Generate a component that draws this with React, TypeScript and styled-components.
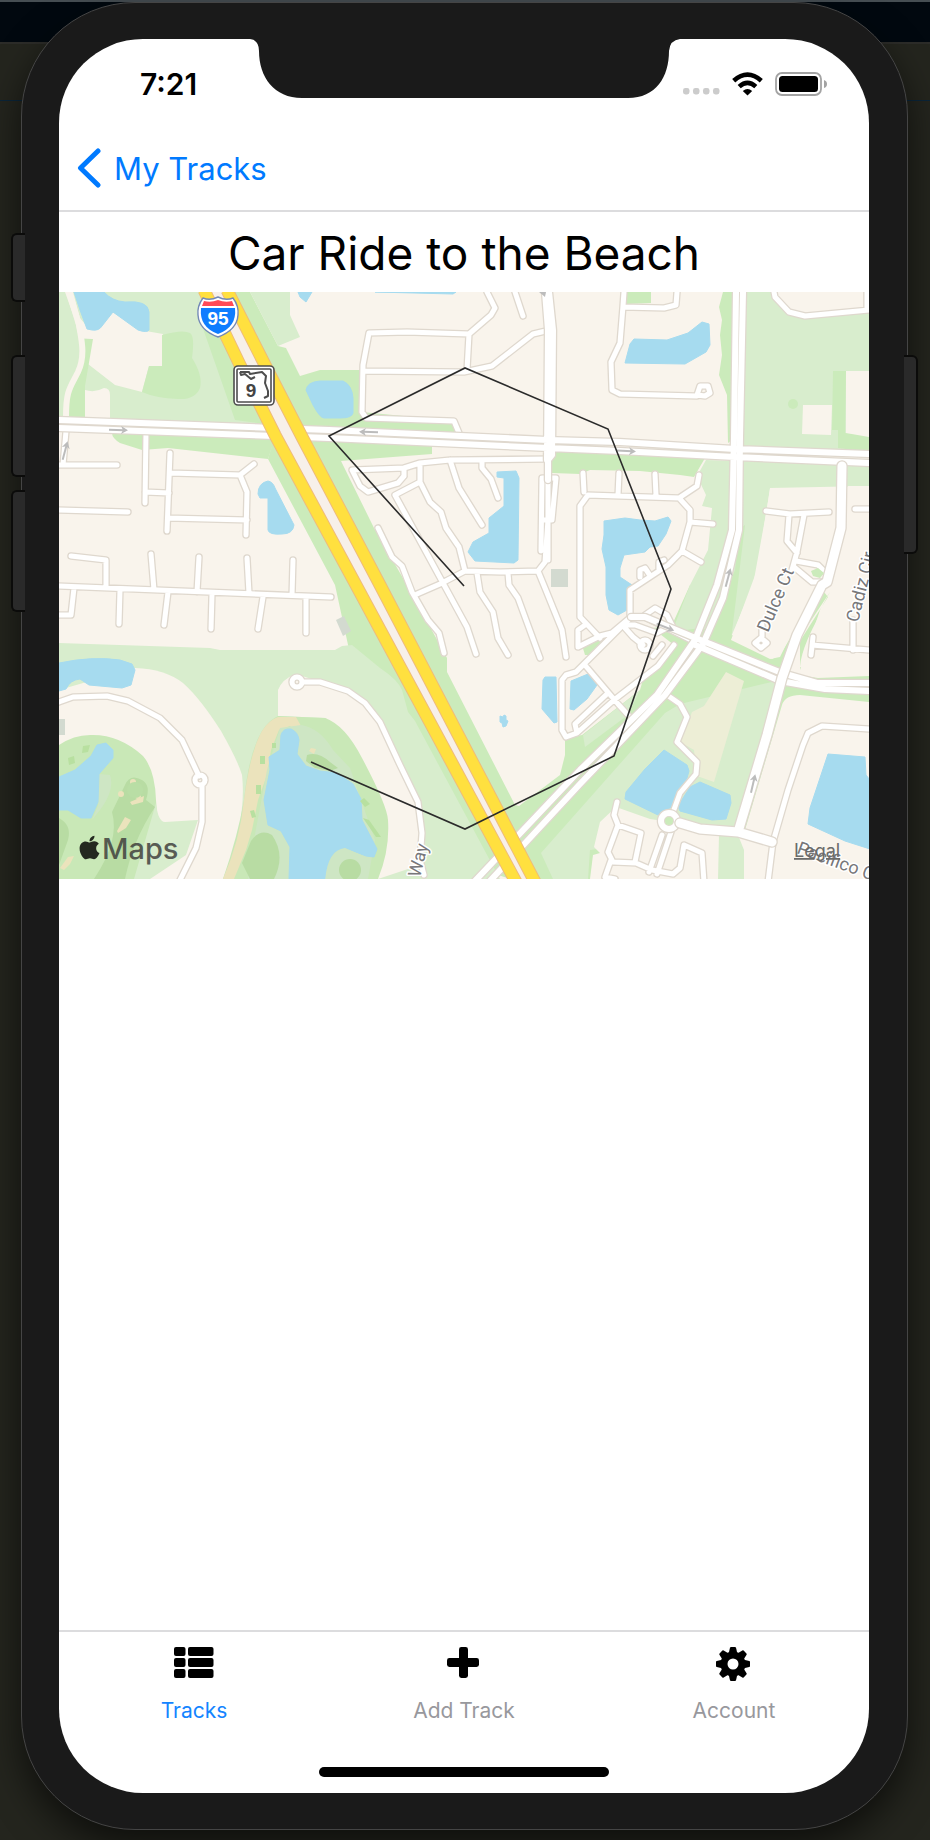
import React from 'react';
import styled, { createGlobalStyle } from 'styled-components';
import { FaApple } from 'react-icons/fa';

const GlobalStyle = createGlobalStyle`
  * { box-sizing: border-box; }
  body { margin: 0; background: #1d1e18; font-family: Inter, "Liberation Sans", sans-serif; }
`;

const Desktop = styled.div`
  min-height: 100vh;
  display: flex;
  padding: 2px 22px 10px 21px;
  background:
    linear-gradient(#464e53, #464e53) 0 0 / 100% 2px no-repeat,
    linear-gradient(#2c2c29, #2c2c29) 0 42px / 100% 2px no-repeat,
    linear-gradient(#0b2539, #0b2539) 0 100px / 100% 1px no-repeat,
    linear-gradient(#01080f, #01080f) 0 0 / 100% 42px no-repeat,
    #24251e;
`;

const Phone = styled.div`
  position: relative;
  flex: 1;
  display: flex;
  padding: 36px 38px 36px 37px;
  border: 1px solid #454545;
  border-radius: 114px;
  background: #1a1a1a;
  box-shadow: 0 16px 36px rgba(0, 0, 0, 0.6);
`;

const SideKey = styled.span<{ $side: 'left' | 'right'; $top: number; $height: number }>`
  position: absolute;
  ${p => p.$side}: -11px;
  top: ${p => p.$top}px;
  width: 14px;
  height: ${p => p.$height}px;
  background: #2a2a2a;
  border: 2px solid #0b0b0a;
  border-${p => (p.$side === 'left' ? 'right' : 'left')}: 0;
  border-radius: ${p => (p.$side === 'left' ? '6px 0 0 6px' : '0 6px 6px 0')};
`;

const Screen = styled.div`
  position: relative;
  flex: 1;
  min-width: 0;
  display: flex;
  flex-direction: column;
  overflow: hidden;
  border-radius: 84px;
  background: #fff;
`;

const Notch = styled.svg`
  position: absolute;
  top: 0;
  left: 50%;
  margin-left: -214px;
`;

const StatusBar = styled.header`
  display: flex;
  align-items: center;
  justify-content: space-between;
  height: 89px;
  padding: 0 42px 0 81px;
`;

const Clock = styled.time`
  font-size: 30px;
  font-weight: 600;
  line-height: 36px;
`;

const StatusIcons = styled.div`
  display: flex;
  align-items: center;
  gap: 12px;
`;

const NavBar = styled.nav`
  display: flex;
  align-items: center;
  height: 84px;
  padding: 0 18px;
  border-bottom: 2px solid #dcdcde;
`;

const BackLink = styled.a`
  display: flex;
  align-items: center;
  gap: 13px;
  color: #007aff;
  font-size: 31px;
  line-height: 40px;
  text-decoration: none;
`;

const Title = styled.h1`
  margin: 0;
  padding: 13px 0 11px;
  font-size: 46px;
  font-weight: 400;
  line-height: 56px;
  text-align: center;
`;

const Content = styled.main`
  flex: 1;
`;

const MapView = styled.svg`
  display: block;
  width: 100%;
  background: #f9f4ec;
`;

const TabBar = styled.nav`
  display: flex;
  height: 132px;
  border-top: 2px solid #dcdcde;
`;

const Tab = styled.a<{ $active?: boolean }>`
  flex: 1;
  display: flex;
  flex-direction: column;
  align-items: center;
  gap: 16px;
  padding-top: 14px;
  color: ${p => (p.$active ? '#1484ff' : '#98989d')};
  font-size: 21px;
  line-height: 26px;
  text-decoration: none;
`;

const TabIcon = styled.svg`
  width: 40px;
  height: 36px;
  fill: #000;
`;

const HomeArea = styled.div`
  display: flex;
  justify-content: center;
  padding: 5px 0 16px;
`;

const HomeIndicator = styled.span`
  width: 290px;
  height: 10px;
  border-radius: 5px;
  background: #000;
`;

/* Terrain: each entry is painted in order, [fill, outline]. */
const PARK = '#d8edcd';
const GRASS = '#cbebbb';
const LOT = '#f9f4ec';
const WATER = '#a6dbef';
const GOLF = '#c9e8b7';
const ROUGH = '#cee6c4';
const FAIRWAY = '#b8dca3';
const SAND = '#ebe3bc';

const terrain: [string, string][] = [
  [PARK, 'M59 292H205L275 425L59 417Z'],
  [LOT, 'M65 292H73L80 318L90 330L113 312L140 330L163 334V366H149L142 392L115 385L88 364L92 339L79 338L75 320Z'],
  [LOT, 'M85 390Q95 393 104 388Q110 388 110 395V420H85Z'],
  [GRASS, 'M79 339H93L85 386V420H69V395L83 365Z'],
  [GRASS, 'M162 335Q183 329 190 333Q195 336 192 358Q203 375 200 388Q195 400 178 399Q155 398 142 392L149 366H162Z'],
  [GRASS, 'M112 433L275 438L268 459L168 448L142 450L120 443Q112 438 112 433Z'],
  [GRASS, 'M235 292H250L278 346L286 348L300 376L320 370H362V412L455 421V434L330 433L235 420L200 320Z'],
  [PARK, 'M250 292H290V315L300 337L278 346Z'],
  [GRASS, 'M268 459L275 435L432 446V454L341 461L374 528L411 592L447 658V672L515 805L519 806L560 775L565 755V738L582 735L640 690L650 655L585 655L582 645L596 640L640 630L672 625L690 585L708 620L780 665L760 735L660 735L600 879H510L426 850L360 700L335 585Z'],
  [PARK, 'M59 643L210 648L220 650H335L342 646L352 645L380 668Q398 680 402 690L408 712L415 721L500 879H59Z'],
  [PARK, 'M583 735L640 690L628 715L585 747Z'],
  [PARK, 'M541 853L665 713L680 704L780 680L738 832L590 850L588 879H553Z'],
  [LOT, 'M59 690L135 668Q165 669 183 683Q200 698 221 731Q238 761 242 775Q247 820 223 879H59Z'],
  [GOLF, 'M59 745Q75 734 93 735Q120 735 143 756Q155 770 156 800L157 815L152 830Q150 855 135 879H59Z'],
  [PARK, 'M156 803Q158 822 165 822L198 820L186 855L150 879H134Z'],
  [ROUGH, 'M100 810Q115 790 110 775L99 774L98 805L92 820Z'],
  [FAIRWAY, 'M94 879Q120 840 112 812L125 785Q130 773 142 780Q151 785 146 800L155 807Q133 840 125 879Z'],
  [FAIRWAY, 'M59 818Q72 825 68 840L59 865Z'],
  [SAND, 'M117 831L125 817L131 820L126 828L118 833Z'],
  [SAND, 'M130 802L144 796L143 802L132 805Z'],
  [SAND, 'M60 868L68 857L74 856L70 864L64 870Z'],
  [LOT, 'M278 716V690Q282 679 296 674L348 691L380 722L418 802L420 865L378 879V800L326 718Z'],
  [GOLF, 'M278 716L325 718Q345 725 362 758Q387 805 388 820Q390 850 378 879H223Q238 835 244 800Q249 752 262 731Q269 720 278 716Z'],
  [SAND, 'M278 717H296L301 726L303 742L299 735L290 726L279 730L271 750L267 775L258 800L252 830L246 850L234 879H223Q240 840 244 800Q250 752 262 731Q269 720 278 717Z'],
  [ROUGH, 'M301 725Q320 728 333 750L350 768L375 840L368 879H248L253 845L267 770L280 728Z'],
  [FAIRWAY, 'M242 863L251 841Q260 828 272 835Q286 855 274 879H250Z'],
  [FAIRWAY, 'M307 755Q318 751 330 762L338 768L330 771L315 768L306 761Z'],
  [SAND, 'M311 748L316 749L314 754L309 751Z'],
  [LOT, 'M623 625L660 634L674 645L650 670L614 700L584 664Z'],
  [LOT, 'M616 807L650 819L738 832L869 850V879H590L593 855L600 853L594 847L600 822Z'],
  [PARK, 'M719 835H738L744 850V879H718Z'],
  [GRASS, 'M723 292H736L732 440L728 443L727 395L719 375L722 355L720 335L722 320L719 307Z'],
  [GRASS, 'M627 292H651V303L627 304Z'],
  [PARK, 'M745 292H869V455L743 449Z'],
  [LOT, 'M774 292H866V310L805 316L789 312Z'],
  [GRASS, 'M833 371H846L845 433L869 435V452L838 448V430L832 430Z'],
  [LOT, 'M846 371H869V437L846 433Z'],
  [LOT, 'M803 405H832L831 435L802 434Z'],
  [GRASS, 'M551 448L705 458L694 477L680 475L640 471L590 470L580 474L552 473Z'],
  [PARK, 'M706 460L869 465V486L770 488L767 508L753 585L731 637L700 628L672 632L690 585L708 550L712 508L702 506L706 495L697 476Z'],
  [GRASS, 'M731 640L745 525L740 528L735 570L710 632L778 672L818 678L869 676V702L800 695Q785 695 782 705L745 830L737 832L782 690L798 640L830 592L820 610L800 670V641L828 597L820 587L795 630L780 655L772 659Z'],
  [LOT, 'M770 489L837 490L841 530L808 600L780 657L770 659L731 640L757 570Z'],
  [LOT, 'M848 486H869V676L818 674L800 667Q801 645 830 597L847 530Z'],
  ['#edeed6', 'M726 672L744 681L714 782L697 776L694 750L680 742L692 712L704 706Z'],
  ['#d3dad0', 'M551 569H568V587H551Z'],
  ['#d3dad0', 'M336 620L344 616L351 631L343 636Z'],
  ['#d3dad0', 'M59 719H65V735H59Z'],
];

const lakes = [
  'M74 292H104Q112 301 125 302Q148 300 149 312V330Q147 333 138 330L113 312L102 326Q99 331 92 330L87 329L80 310Z',
  'M298 292H312L309 297L306 302L300 297Z',
  'M375 292H456L453 294Z',
  'M306 390Q307 382 320 381H343Q352 385 353 398V413Q352 418 340 418H324Q320 418 313 405Z',
  'M258 494Q258 483 268 481Q273 482 275 488L294 525Q293 534 282 534Q269 535 268 530V498H260Z',
  'M497 472L516 471L519 478L518 560L514 563L475 561L468 552L473 542L489 533V518L504 506V478L497 477Z',
  'M634 339L667 340L688 333L702 322L709 324L710 345L706 352L685 364L625 363L630 344Z',
  'M604 521L625 518L640 520L655 521L668 517L671 521L666 534L658 546L650 547L645 552L624 555L620 568V577L632 585L627 610L618 615L609 610L606 595V567L602 549L604 535Z',
  'M545 677H556L557 722L554 723L542 709L543 680Z',
  'M571 681L588 674L597 685L587 699L574 710L570 709Z',
  'M500 716L503 717L504 715L506 716L506 720L508 721L506 726L503 727L502 723L500 722Z',
  'M59 663Q92 656 120 660L132 664L135 670L131 685L122 688L89 685L80 679Q70 680 66 689L59 691Z',
  'M59 777L75 770L91 756L97 745L106 743L113 750L113 758L99 774L98 802L91 818L81 818L68 810H59Z',
  'M281 735Q283 728 291 729Q298 732 299 740L297 754L306 766L320 771L337 773L353 784L361 799L362 820L377 849L374 857L366 856L345 848Q332 850 330 862L325 879H289L290 847L281 831L268 825L264 800L270 770L269 757L280 750Z',
  'M664 750L687 765L689 771L685 785L673 806L658 815L625 799L626 792L645 769Z',
  'M700 782L730 795L731 803L726 819L712 820L680 811L678 806L690 787Z',
  'M828 754L865 757L866 775L870 780V849L845 841L808 824L810 808Z',
];

const lanes = [
  'M67 420L63 465', 'M59 465H117', 'M59 510L128 512', 'M146 431L145 503', 'M145 492L169 493',
  'M170 453L167 531', 'M170 473L240 475L254 464', 'M240 475L247 492L246 535', 'M168 518L247 520',
  'M71 556L106 560V588', 'M151 554L154 590', 'M199 557L197 592', 'M247 558L249 593', 'M293 560L292 595',
  'M59 586L331 597', 'M74 588L71 615H59', 'M120 590L119 624', 'M168 592L164 625', 'M212 594L211 629',
  'M263 597L258 629', 'M306 597V633',
  'M59 702L73 697L107 696L128 701L160 718L182 740L199 776', 'M202 786V822L196 848L179 882',
  'M205 780a5 5 0 1 0-10 0a5 5 0 1 0 10 0', 'M302 682a5 5 0 1 0-10 0a5 5 0 1 0 10 0',
  'M303 682H320L348 691L365 703L380 722L400 765L418 802L422 833L420 860L424 875',
  'M487 292L495 308L491 315L469 334L407 332L369 333L363 365L362 412L366 418L454 421L459 433L452 441',
  'M363 371L464 372L492 366L533 334L550 330', 'M469 334L467 370', 'M515 292L523 316',
  'M404 476V468L352 470L360 486L368 492L398 483L404 476', 'M404 468L420 463L450 460L548 459',
  'M420 463V482L395 495L443 583L467 627L476 654', 'M420 482L430 502L441 512L446 528L459 547L465 571',
  'M450 460L459 488L482 525', 'M482 461V468L491 479L498 498',
  'M378 528L392 557L402 566L412 592L428 620L439 633L444 653',
  'M417 594L440 584L465 571L500 572L538 571L545 562L548 520', 'M477 573L480 592L493 612L498 638L508 655',
  'M508 573L509 585L518 598L540 658', 'M538 571L545 588L562 630L566 657',
  'M541 551L542 478H556L552 520H543', 'M548 478V560',
  'M624 292L623 306L620 343L611 362L612 390L620 394L697 396', 'M697 395L700 386L708 386L710 393L705 396L697 395',
  'M623 307L664 308L676 305L677 292', 'M774 292L775 297L789 312L805 316L869 310', 'M867 292V310',
  'M583 473L584 492', 'M600 638L580 617V506L588 495L679 498L690 510V522L682 551L668 565L630 590V617',
  'M619 473L618 495', 'M655 474L656 495', 'M679 498L697 486L699 475', 'M690 522L713 524', 'M682 551L701 562',
  'M640 577V570L645 568L649 574', 'M659 570V562L664 560',
  'M585 625L578 630V647L600 636L612 633L631 617',
  'M631 617L584 664L576 672L566 675L562 680V730L566 737L577 733L575 724L608 693', 'M577 733L614 700L658 666L674 645',
  'M584 664L618 704L628 715', 'M623 625L635 625L657 633L672 625', 'M625 628L633 637L643 645',
  'M650 645a5 5 0 1 0-10 0a5 5 0 1 0 10 0', 'M653 656L662 645', 'M645 615L655 608L667 615L672 625',
  'M667 695L680 704L687 717L677 742L697 762L696 774L680 793L672 815',
  'M617 802L614 815L618 825L608 852L613 862L636 863L652 870L673 874L680 868L684 845L702 853L704 882',
  'M618 825L641 833L635 862', 'M611 860L605 877L615 879', 'M773 842L768 882',
  'M773 842L788 790L803 745L808 733L822 726L869 729',
  'M766 511L790 514L829 512', 'M789 515L787 541L797 553', 'M804 515L797 552L792 570',
  'M794 567L812 582H826', 'M796 561L818 565L828 575',
  'M762 625V637', 'M761 638L767 643L761 648L755 643Z', 'M855 509H869', 'M813 637L811 655', 'M812 645L869 650', 'M853 650V620',
  'M645 617L695 642', 'M662 835L649 872', 'M671 832L657 874',
];

const streets = [
  'M59 420L329 430L548 440L620 442L735 449L869 454',
  'M59 428L329 438L548 448L620 451L735 457L869 463',
  'M736 292L734 437L732 530L717 585L695 640L657 695L580 770L474 882',
  'M743 292L740 437L739 530L723 598L703 644L665 695L580 784L489 882',
  'M545 292L548 330L547 460', 'M549 292L553 330L552 455L548 460V480',
  'M631 617H645L693 637L782 673L817 683H869', 'M693 644L780 681L825 689L869 691',
  'M677 821a8 8 0 1 0-16 0a8 8 0 1 0 16 0',
];

const avenues = [
  'M842 466L841 528L827 582L822 585L797 635L782 678L767 735L738 832',
  'M680 823L700 829L738 832L772 842',
];

const highway = [
  'M204 290L240 365L275 435L356 585L516 882',
  'M227 290L265 365L302 437L380 585L535 882',
];

const arrows: [number, number, number][] = [
  [118, 430, 2], [65, 451, -75], [369, 432, 182], [626, 451, 3], [728, 578, -75], [665, 627, 22], [753, 784, -77],
];

const Route = styled.polyline`
  fill: none;
  stroke: #2b2b2b;
  stroke-width: 1.6;
`;

const StreetName = styled.text`
  font-family: Roboto, sans-serif;
  font-size: 18px;
  fill: #77777a;
  stroke: #fff;
  stroke-width: 3px;
  stroke-linejoin: round;
  paint-order: stroke;
`;

function Roads({ paths, width }: { paths: string[]; width: number }) {
  const d = paths.join('');
  return (
    <g fill="none" strokeLinecap="round" strokeLinejoin="round">
      <path d={d} stroke="#dfd8ce" strokeWidth={width + 2.6} />
      <path d={d} stroke="#fff" strokeWidth={width} />
    </g>
  );
}

function TrackMap() {
  return (
    <MapView viewBox="59 292 810 587" role="img" aria-label="Map of the recorded track">
      {terrain.map(([fill, d]) => <path key={d} d={d} fill={fill} />)}
      {[[133, 782], [121, 794], [138, 796]].map(([x, y]) => <circle key={x} cx={x} cy={y} r="3" fill={SAND} />)}
      <circle cx="135" cy="790" r="8" fill="#b9dea5" />
      <circle cx="793" cy="404" r="5" fill={GRASS} />
      {lakes.map(d => <path key={d} d={d} fill={WATER} stroke={WATER} strokeWidth="1" strokeLinejoin="round" />)}
      <path d="M325 882Q327 850 345 848L366 857L368 882Z" fill={ROUGH} />
      <circle cx="350" cy="870" r="11" fill={FAIRWAY} />
      {['M272 743h4v5h-4z', 'M260 756h5v8h-5z', 'M256 785h5v9h-5z', 'M250 811l4-1 2 7-4 1z', 'M68 758l6-2 1 7-6 2z', 'M83 746l7-1-2 7-6 1z', 'M360 801l4-3 6 6-5 3z', 'M363 818l6 2 12 17-5 0z'].map(d => (
        <path key={d} d={d} fill="#b8e0a0" />
      ))}
      <path d="M66 417C66 390 70 388 78 372C86 355 81 338 79 325L69 292" fill="none" stroke={LOT} strokeWidth="6" />
      <Roads paths={lanes} width={5} />
      <Roads paths={streets} width={6} />
      <Roads paths={avenues} width={9} />
      <circle cx="669" cy="821" r="4" fill={GRASS} />
      <path d="M811 571L818 568L824 573L820 578L813 576Z" fill={GRASS} />
      <path d="M215 290L252 365L288 435L368 585L526 882" fill="none" stroke="#f7f0e9" strokeWidth="12" />
      <g fill="none">
        <path d={highway.join('')} stroke="#efbb7b" strokeWidth="13" />
        <path d={highway.join('')} stroke="#ffe03f" strokeWidth="11" />
      </g>
      {arrows.map(([x, y, r]) => (
        <g key={`${x}-${y}`} transform={`translate(${x} ${y}) rotate(${r})`}>
          <path d="M-9 0H6" stroke="#bcbcbc" strokeWidth="2" />
          <path d="M10 0L3 -4L5 0L3 4Z" fill="#bcbcbc" />
        </g>
      ))}
      <path d="M539 292h7l-1 5z" fill="#bcbcbc" />

      <g>
        <path d="M203 298Q210 301 218 297Q226 301 233 298Q239 306 238 315Q237 330 218 337Q199 330 198 315Q197 306 203 298Z" fill="#fff" stroke="#7389b6" strokeWidth="1.4" />
        <path d="M204 301Q211 303 218 300Q225 303 232 301L234 306H202Z" fill="#ff4a57" />
        <path d="M201 308H235Q237 327 218 334Q199 327 201 308Z" fill="#0f7dff" />
        <text x="218" y="325" textAnchor="middle" fontFamily="Liberation Sans, sans-serif" fontWeight="700" fontSize="19" fill="#fff">95</text>
      </g>
      <g fill="none" stroke="#4e4e4e">
        <rect x="234" y="366" width="40" height="39" rx="4" fill="#fff" strokeWidth="1.6" />
        <rect x="237" y="369" width="34" height="33" rx="1" strokeWidth="1.6" />
        <path d="M240 372H249L250 374L262 372L266 376L265 383L268 391V396L264 398M240 372L241 375L245 374L251 379L255 377" strokeWidth="2" strokeLinejoin="round" />
        <text x="251" y="397" textAnchor="middle" fontFamily="Liberation Sans, sans-serif" fontWeight="700" fontSize="19" fill="#444" stroke="none">9</text>
      </g>

      <StreetName transform="translate(768 633) rotate(-67)">Dulce Ct</StreetName>
      <StreetName transform="translate(858 623) rotate(-76)">Cadiz Cir</StreetName>
      <StreetName transform="translate(420 878) rotate(-76)">Way</StreetName>
      <StreetName transform="translate(796 853) rotate(20)">Pacifico Ct</StreetName>

      <Route points="464,586 329,436 465,368 608,429 671,589 614,756 465,829 311,762" />

      <g fill="#3c3c3a" opacity="0.82">
        <FaApple size={27} x="76" y="834" />
        <text x="102" y="859" fontSize="29" fontWeight="500">Maps</text>
      </g>
      <a href="#legal">
        <text x="794" y="857" fontSize="18" fill="#6b6b69" textDecoration="underline">Legal</text>
      </a>
    </MapView>
  );
}

export default function App() {
  return (
    <>
      <GlobalStyle />
      <Desktop>
        <Phone>
          <SideKey $side="left" $top={230} $height={69} />
          <SideKey $side="left" $top={352} $height={122} />
          <SideKey $side="left" $top={487} $height={122} />
          <SideKey $side="right" $top={352} $height={199} />
          <Screen>
            <Notch width="430" height="59" viewBox="0 0 430 59" aria-hidden="true">
              <path d="M0 0Q9 1 9 12C9 38 24 59 52 59H378C406 59 419 38 419 12Q420 1 430 0Z" fill="#1a1a1a" />
            </Notch>
            <StatusBar>
              <Clock>7:21</Clock>
              <StatusIcons>
                <svg width="37" height="22" viewBox="0 0 37 22" fill="#cccccc" aria-hidden="true">
                  {[0, 10, 20, 30].map(x => <rect key={x} x={x} y="15" width="6.5" height="6.5" rx="2.4" />)}
                </svg>
                <svg width="31" height="24" viewBox="0 0 31 24" fill="none" stroke="#000" strokeWidth="4.6" aria-label="Wi-Fi">
                  <path d="M1.7 8.7Q15.500 -3.500 29.300 8.700" />
                  <path d="M7.200 14.600Q15.500 7.200 23.800 14.600" />
                  <path d="M15.500 23.500L10.800 19Q15.500 14.800 20.200 19Z" fill="#000" stroke="none" />
                </svg>
                <svg width="52" height="24" viewBox="0 0 52 24" aria-label="Battery">
                  <rect x="1" y="1" width="45" height="22" rx="6" fill="none" stroke="#a3a3a3" strokeWidth="1.800" />
                  <rect x="4" y="4" width="39" height="16" rx="3.500" />
                  <path d="M49 8Q52 9 52 12Q52 15 49 16Z" fill="#a3a3a3" />
                </svg>
              </StatusIcons>
            </StatusBar>
            <NavBar>
              <BackLink href="#tracks">
                <svg width="24" height="42" viewBox="0 0 24 42" fill="none" stroke="#007aff" strokeWidth="5" strokeLinecap="round" strokeLinejoin="round" aria-hidden="true">
                  <path d="M21 3L3.500 20L21 37" />
                </svg>
                My Tracks
              </BackLink>
            </NavBar>
            <Content>
              <Title>Car Ride to the Beach</Title>
              <TrackMap />
            </Content>
            <TabBar>
              <Tab href="#tracks" $active>
                <TabIcon viewBox="0 0 40 36" aria-hidden="true">
                  {[1, 12, 23].map(y => (
                    <React.Fragment key={y}>
                      <rect x="0" y={y} width="11.500" height="9" rx="2" />
                      <rect x="14" y={y} width="25.500" height="9" rx="2" />
                    </React.Fragment>
                  ))}
                </TabIcon>
                Tracks
              </Tab>
              <Tab href="#add">
                <TabIcon viewBox="0 0 40 36" aria-hidden="true">
                  <rect x="3" y="12" width="32" height="9" rx="2.400" />
                  <rect x="15" y="1" width="9" height="31" rx="2.400" />
                </TabIcon>
                Add Track
              </Tab>
              <Tab href="#account">
                <TabIcon viewBox="0 0 40 36" aria-hidden="true">
                  <circle cx="19" cy="18" r="9" fill="none" stroke="#000" strokeWidth="7" />
                  {[0, 45, 90, 135, 180, 225, 270, 315].map(a => (
                    <path key={a} d="M14.500 8L16 1.800Q16.200 1 17 1H21Q21.800 1 22 1.800L23.500 8Z" transform={`rotate(${a} 19 18)`} />
                  ))}
                </TabIcon>
                Account
              </Tab>
            </TabBar>
            <HomeArea><HomeIndicator /></HomeArea>
          </Screen>
        </Phone>
      </Desktop>
    </>
  );
}
